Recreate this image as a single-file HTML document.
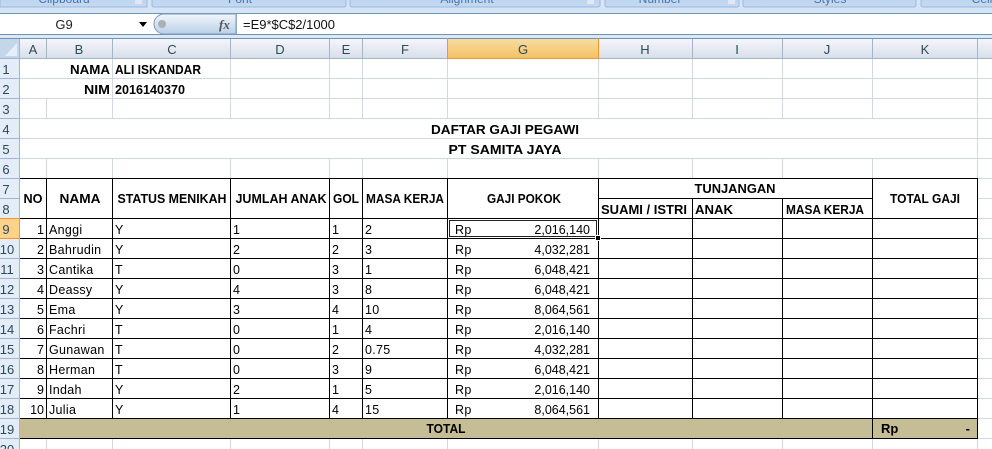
<!DOCTYPE html>
<html><head><meta charset="utf-8"><style>
html,body{margin:0;padding:0;background:#fff;width:992px;height:449px;overflow:hidden}
svg{display:block}
text{font-family:"Liberation Sans",sans-serif;font-size:12.5px;fill:#000;letter-spacing:.3px}
.b{font-weight:bold;letter-spacing:0;font-size:13px}
.e{text-anchor:end;letter-spacing:0}
.m{text-anchor:middle}
.n{letter-spacing:0}
.h{fill:#2b4a5c;letter-spacing:0;text-anchor:middle;font-size:13px}
.r{fill:#2b4a5c;letter-spacing:0;text-anchor:middle;font-size:13px}
.g{fill:#4a74ad;font-size:12px;letter-spacing:0;text-anchor:middle}
</style></head><body>
<svg width="992" height="449" viewBox="0 0 992 449" xmlns="http://www.w3.org/2000/svg" shape-rendering="crispEdges">
<defs>
<linearGradient id="hd" x1="0" y1="0" x2="0" y2="1"><stop offset="0" stop-color="#f4f6fa"/><stop offset="1" stop-color="#d9dfe9"/></linearGradient>
<linearGradient id="og" x1="0" y1="0" x2="0" y2="1"><stop offset="0" stop-color="#f8dca0"/><stop offset="1" stop-color="#f2c265"/></linearGradient>
<linearGradient id="fx" x1="0" y1="0" x2="0" y2="1"><stop offset="0" stop-color="#f2f6fb"/><stop offset="1" stop-color="#b9cfe8"/></linearGradient>
<linearGradient id="rb" x1="0" y1="0" x2="0" y2="1"><stop offset="0" stop-color="#bdd5ef"/><stop offset="1" stop-color="#c4d9f1"/></linearGradient>
</defs>

<!-- ribbon -->
<rect x="0" y="0" width="992" height="13" fill="#d6e5f5"/>
<rect x="0" y="-2" width="147" height="9" fill="url(#rb)" stroke="#9db8d6"/>
<rect x="152" y="-2" width="194" height="9" rx="2" fill="url(#rb)" stroke="#9db8d6"/>
<rect x="350" y="-2" width="250" height="9" rx="2" fill="url(#rb)" stroke="#9db8d6"/>
<rect x="605" y="-2" width="134" height="9" rx="2" fill="url(#rb)" stroke="#9db8d6"/>
<rect x="743" y="-2" width="173" height="9" rx="2" fill="url(#rb)" stroke="#9db8d6"/>
<rect x="921" y="-2" width="80" height="9" rx="2" fill="url(#rb)" stroke="#9db8d6"/>
<text x="64" y="3" class="g">Clipboard</text>
<text x="240" y="3" class="g">Font</text>
<text x="467" y="3" class="g">Alignment</text>
<text x="660" y="3" class="g">Number</text>
<text x="830" y="3" class="g">Styles</text>
<text x="985" y="3" class="g">Cells</text>
<rect x="135" y="0" width="7" height="4" fill="#dfe9f5"/>
<rect x="587" y="0" width="7" height="4" fill="#dfe9f5"/>
<rect x="728" y="0" width="7" height="4" fill="#dfe9f5"/>

<!-- formula bar -->
<rect x="0" y="13" width="992" height="1" fill="#6f93b5"/>
<rect x="0" y="14" width="992" height="20" fill="#fff"/>
<rect x="0" y="34" width="992" height="1" fill="#6f93b5"/>
<rect x="0" y="35" width="992" height="3" fill="#dce8f6"/>
<text x="64" y="29" class="m" style="letter-spacing:0;fill:#222;font-size:13px">G9</text>
<path d="M139 22h8l-4 5z" fill="#000" shape-rendering="auto"/>
<path d="M236 14H164a10 10 0 0 0 0 20H236z" fill="url(#fx)" stroke="#7d9cbe" shape-rendering="auto"/>
<circle cx="162" cy="24" r="4" fill="#a9b0b8" shape-rendering="auto"/>
<text x="219" y="29" style="font-family:'Liberation Serif',serif;font-style:italic;font-weight:bold;font-size:13px;fill:#555;letter-spacing:0">fx</text>
<rect x="236" y="14" width="1" height="20" fill="#8fa9c6"/>
<text x="243" y="29" style="letter-spacing:0;fill:#111;font-size:13px" textLength="92" lengthAdjust="spacingAndGlyphs">=E9*$C$2/1000</text>

<!-- column headers -->
<rect x="0" y="38" width="992" height="1" fill="#6f93b5"/>
<rect x="0" y="39" width="992" height="19" fill="url(#hd)"/>
<rect x="0" y="39" width="19" height="19" fill="#c3d6ea"/>
<path d="M5 56 L17 56 L17 43z" fill="#e6eef7" shape-rendering="auto"/>
<rect x="448" y="39" width="150" height="19" fill="url(#og)"/>
<path fill="#9eb6ce" d="M19 39h1v19h-1zM46 39h1v19h-1zM112 39h1v19h-1zM230 39h1v19h-1zM329 39h1v19h-1zM362 39h1v19h-1zM692 39h1v19h-1zM782 39h1v19h-1zM872 39h1v19h-1zM977 39h1v19h-1z"/>
<rect x="0" y="58" width="992" height="1" fill="#9eb6ce"/>
<rect x="447" y="38" width="1" height="21" fill="#f29536"/>
<rect x="598" y="38" width="1" height="21" fill="#f29536"/>
<rect x="447" y="58" width="152" height="1" fill="#f29536"/>
<text x="33" y="54" class="h">A</text>
<text x="79" y="54" class="h">B</text>
<text x="172" y="54" class="h">C</text>
<text x="280" y="54" class="h">D</text>
<text x="346" y="54" class="h">E</text>
<text x="405" y="54" class="h">F</text>
<text x="523" y="54" class="h">G</text>
<text x="645" y="54" class="h">H</text>
<text x="737" y="54" class="h">I</text>
<text x="827" y="54" class="h">J</text>
<text x="925" y="54" class="h">K</text>

<!-- row headers -->
<rect x="0" y="59" width="19" height="390" fill="#e4ecf7"/>
<rect x="0" y="219" width="19" height="19" fill="#fdd38a"/>
<path fill="#9eb6ce" d="M0 78h19v1H0zM0 98h19v1H0zM0 118h19v1H0zM0 138h19v1H0zM0 158h19v1H0zM0 178h19v1H0zM0 198h19v1H0zM0 258h19v1H0zM0 278h19v1H0zM0 298h19v1H0zM0 318h19v1H0zM0 338h19v1H0zM0 358h19v1H0zM0 378h19v1H0zM0 398h19v1H0zM0 418h19v1H0zM0 438h19v1H0z"/>
<rect x="0" y="218" width="20" height="1" fill="#f29536"/>
<rect x="0" y="238" width="20" height="1" fill="#f29536"/>
<rect x="19" y="59" width="1" height="390" fill="#9eb6ce"/>
<rect x="19" y="218" width="1" height="21" fill="#f29536"/>
<g>
<text x="6" y="74" class="r">1</text><text x="6" y="94" class="r">2</text><text x="6" y="114" class="r">3</text><text x="6" y="134" class="r">4</text><text x="6" y="154" class="r">5</text><text x="6" y="174" class="r">6</text><text x="6" y="194" class="r">7</text><text x="6" y="214" class="r">8</text><text x="6" y="234" class="r">9</text>
<text x="7" y="254" class="r">10</text><text x="7" y="274" class="r">11</text><text x="7" y="294" class="r">12</text><text x="7" y="314" class="r">13</text><text x="7" y="334" class="r">14</text><text x="7" y="354" class="r">15</text><text x="7" y="374" class="r">16</text><text x="7" y="394" class="r">17</text><text x="7" y="414" class="r">18</text><text x="7" y="434" class="r">19</text><text x="7" y="454" class="r">20</text>
</g>

<!-- light grid -->
<path fill="#d0d7e5" d="M20 78h972v1H20zM20 98h972v1H20zM20 118h972v1H20zM20 138h972v1H20zM20 158h972v1H20zM977 178h15v1h-15zM977 198h15v1h-15zM977 218h15v1h-15zM977 238h15v1h-15zM977 258h15v1h-15zM977 278h15v1h-15zM977 298h15v1h-15zM977 318h15v1h-15zM977 338h15v1h-15zM977 358h15v1h-15zM977 378h15v1h-15zM977 398h15v1h-15zM977 418h15v1h-15zM20 438h972v1H20z"/>
<path fill="#d0d7e5" d="M112 59h1v60h-1zM230 59h1v60h-1zM329 59h1v60h-1zM362 59h1v60h-1zM447 59h1v60h-1zM598 59h1v60h-1zM692 59h1v60h-1zM782 59h1v60h-1zM872 59h1v60h-1zM977 59h1v120h-1zM46 99h1v20h-1z"/>
<path fill="#d0d7e5" d="M46 159h1v20h-1zM112 159h1v20h-1zM230 159h1v20h-1zM329 159h1v20h-1zM362 159h1v20h-1zM447 159h1v20h-1zM598 159h1v20h-1zM692 159h1v20h-1zM782 159h1v20h-1zM872 159h1v20h-1z"/>
<path fill="#d0d7e5" d="M46 439h1v10h-1zM112 439h1v10h-1zM230 439h1v10h-1zM329 439h1v10h-1zM362 439h1v10h-1zM447 439h1v10h-1zM598 439h1v10h-1zM692 439h1v10h-1zM782 439h1v10h-1zM872 439h1v10h-1zM977 439h1v10h-1z"/>

<!-- total band -->
<rect x="20" y="418" width="958" height="20" fill="#c5bd95"/>

<!-- black table lines -->
<path fill="#000" d="M20 178h958v1H20zM598 198h275v1H598zM20 218h958v1H20zM20 238h958v1H20zM20 258h958v1H20zM20 278h958v1H20zM20 298h958v1H20zM20 318h958v1H20zM20 338h958v1H20zM20 358h958v1H20zM20 378h958v1H20zM20 398h958v1H20zM20 418h958v1H20zM20 438h958v1H20z"/>
<path fill="#000" d="M46 178h1v240h-1zM112 178h1v240h-1zM230 178h1v240h-1zM329 178h1v240h-1zM362 178h1v240h-1zM447 178h1v240h-1zM598 178h1v240h-1zM692 198h1v220h-1zM782 198h1v220h-1zM872 178h1v260h-1zM977 178h1v261h-1z"/>

<!-- selection -->
<rect x="449.500" y="220.500" width="147" height="16" fill="none" stroke="#222" stroke-width="1"/>
<rect x="595" y="235" width="6" height="6" fill="#fff"/>
<rect x="596" y="236" width="4" height="4" fill="#000"/>

<!-- headline text -->
<text x="110" y="74" class="b e" textLength="40" lengthAdjust="spacingAndGlyphs">NAMA</text>
<text x="115" y="74" class="b" textLength="86" lengthAdjust="spacingAndGlyphs">ALI ISKANDAR</text>
<text x="110" y="94" class="b e" textLength="26" lengthAdjust="spacingAndGlyphs">NIM</text>
<text x="115" y="94" class="b" textLength="70" lengthAdjust="spacingAndGlyphs">2016140370</text>
<text x="505" y="134" class="b m" textLength="148" lengthAdjust="spacingAndGlyphs">DAFTAR GAJI PEGAWI</text>
<text x="505" y="154" class="b m" textLength="113" lengthAdjust="spacingAndGlyphs">PT SAMITA JAYA</text>

<text x="33" y="203" class="b m" textLength="19" lengthAdjust="spacingAndGlyphs">NO</text>
<text x="80" y="203" class="b m" textLength="41" lengthAdjust="spacingAndGlyphs">NAMA</text>
<text x="172" y="203" class="b m" textLength="109" lengthAdjust="spacingAndGlyphs">STATUS MENIKAH</text>
<text x="281" y="203" class="b m" textLength="91" lengthAdjust="spacingAndGlyphs">JUMLAH ANAK</text>
<text x="346" y="203" class="b m" textLength="26" lengthAdjust="spacingAndGlyphs">GOL</text>
<text x="405" y="203" class="b m" textLength="78" lengthAdjust="spacingAndGlyphs">MASA KERJA</text>
<text x="524" y="203" class="b m" textLength="74" lengthAdjust="spacingAndGlyphs">GAJI POKOK</text>
<text x="735" y="193" class="b m" textLength="81" lengthAdjust="spacingAndGlyphs">TUNJANGAN</text>
<text x="925" y="203" class="b m" textLength="70" lengthAdjust="spacingAndGlyphs">TOTAL GAJI</text>
<text x="601" y="214" class="b" textLength="86" lengthAdjust="spacingAndGlyphs">SUAMI / ISTRI</text>
<text x="695" y="214" class="b" textLength="38" lengthAdjust="spacingAndGlyphs">ANAK</text>
<text x="786" y="214" class="b" textLength="78" lengthAdjust="spacingAndGlyphs">MASA KERJA</text>

<!-- data -->
<text x="44" y="234" class="e n">1</text><text x="49" y="234">Anggi</text><text x="115" y="234">Y</text><text x="233" y="234">1</text><text x="332" y="234">1</text><text x="365" y="234">2</text><text x="455" y="234">Rp</text><text x="590" y="234" class="e">2,016,140</text>
<text x="44" y="254" class="e n">2</text><text x="49" y="254">Bahrudin</text><text x="115" y="254">Y</text><text x="233" y="254">2</text><text x="332" y="254">2</text><text x="365" y="254">3</text><text x="455" y="254">Rp</text><text x="590" y="254" class="e">4,032,281</text>
<text x="44" y="274" class="e n">3</text><text x="49" y="274">Cantika</text><text x="115" y="274">T</text><text x="233" y="274">0</text><text x="332" y="274">3</text><text x="365" y="274">1</text><text x="455" y="274">Rp</text><text x="590" y="274" class="e">6,048,421</text>
<text x="44" y="294" class="e n">4</text><text x="49" y="294">Deassy</text><text x="115" y="294">Y</text><text x="233" y="294">4</text><text x="332" y="294">3</text><text x="365" y="294">8</text><text x="455" y="294">Rp</text><text x="590" y="294" class="e">6,048,421</text>
<text x="44" y="314" class="e n">5</text><text x="49" y="314">Ema</text><text x="115" y="314">Y</text><text x="233" y="314">3</text><text x="332" y="314">4</text><text x="365" y="314">10</text><text x="455" y="314">Rp</text><text x="590" y="314" class="e">8,064,561</text>
<text x="44" y="334" class="e n">6</text><text x="49" y="334">Fachri</text><text x="115" y="334">T</text><text x="233" y="334">0</text><text x="332" y="334">1</text><text x="365" y="334">4</text><text x="455" y="334">Rp</text><text x="590" y="334" class="e">2,016,140</text>
<text x="44" y="354" class="e n">7</text><text x="49" y="354">Gunawan</text><text x="115" y="354">T</text><text x="233" y="354">0</text><text x="332" y="354">2</text><text x="365" y="354">0.75</text><text x="455" y="354">Rp</text><text x="590" y="354" class="e">4,032,281</text>
<text x="44" y="374" class="e n">8</text><text x="49" y="374">Herman</text><text x="115" y="374">T</text><text x="233" y="374">0</text><text x="332" y="374">3</text><text x="365" y="374">9</text><text x="455" y="374">Rp</text><text x="590" y="374" class="e">6,048,421</text>
<text x="44" y="394" class="e n">9</text><text x="49" y="394">Indah</text><text x="115" y="394">Y</text><text x="233" y="394">2</text><text x="332" y="394">1</text><text x="365" y="394">5</text><text x="455" y="394">Rp</text><text x="590" y="394" class="e">2,016,140</text>
<text x="44" y="414" class="e n">10</text><text x="49" y="414">Julia</text><text x="115" y="414">Y</text><text x="233" y="414">1</text><text x="332" y="414">4</text><text x="365" y="414">15</text><text x="455" y="414">Rp</text><text x="590" y="414" class="e">8,064,561</text>

<text x="446" y="433" class="b m" textLength="39" lengthAdjust="spacingAndGlyphs">TOTAL</text>
<text x="881" y="433" class="b">Rp</text>
<text x="970" y="433" class="b e">-</text>
</svg>
</body></html>
